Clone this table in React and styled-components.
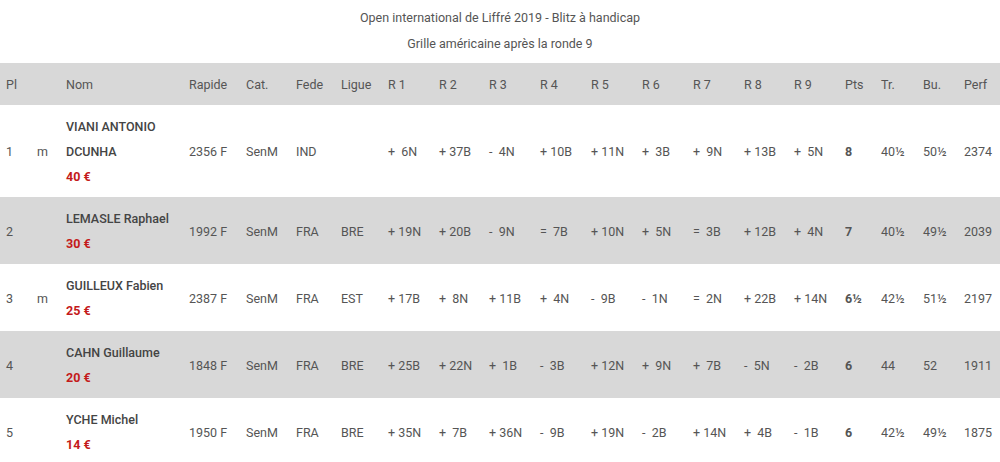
import styled, { createGlobalStyle } from "styled-components";

const GlobalStyle = createGlobalStyle`
  body {
    margin: 0;
    background: #fff;
    font-family: Roboto, "Liberation Sans", sans-serif;
  }
`;

const cols = [31, 29, 123, 57, 50, 45, 47, 51, 50, 51, 51, 51, 51, 51, 50, 51, 36, 42, 41, 42];
const headers = ["Pl", "", "Nom", "Rapide", "Cat.", "Fede", "Ligue", "R 1", "R 2", "R 3", "R 4", "R 5", "R 6", "R 7", "R 8", "R 9", "Pts", "Tr.", "Bu.", "Perf"];

const players = [
  {
    pl: "1", m: "m", name: "VIANI ANTONIO DCUNHA", prize: "40 €", elo: "2356 F", cat: "SenM", fede: "IND", ligue: "",
    rounds: ["+  6N", "+ 37B", "-  4N", "+ 10B", "+ 11N", "+  3B", "+  9N", "+ 13B", "+  5N"],
    pts: "8", tr: "40½", bu: "50½", perf: "2374",
  },
  {
    pl: "2", m: "", name: "LEMASLE Raphael", prize: "30 €", elo: "1992 F", cat: "SenM", fede: "FRA", ligue: "BRE",
    rounds: ["+ 19N", "+ 20B", "-  9N", "=  7B", "+ 10N", "+  5N", "=  3B", "+ 12B", "+  4N"],
    pts: "7", tr: "40½", bu: "49½", perf: "2039",
  },
  {
    pl: "3", m: "m", name: "GUILLEUX Fabien", prize: "25 €", elo: "2387 F", cat: "SenM", fede: "FRA", ligue: "EST",
    rounds: ["+ 17B", "+  8N", "+ 11B", "+  4N", "-  9B", "-  1N", "=  2N", "+ 22B", "+ 14N"],
    pts: "6½", tr: "42½", bu: "51½", perf: "2197",
  },
  {
    pl: "4", m: "", name: "CAHN Guillaume", prize: "20 €", elo: "1848 F", cat: "SenM", fede: "FRA", ligue: "BRE",
    rounds: ["+ 25B", "+ 22N", "+  1B", "-  3B", "+ 12N", "+  9N", "+  7B", "-  5N", "-  2B"],
    pts: "6", tr: "44", bu: "52", perf: "1911",
  },
  {
    pl: "5", m: "", name: "YCHE Michel", prize: "14 €", elo: "1950 F", cat: "SenM", fede: "FRA", ligue: "BRE",
    rounds: ["+ 35N", "+  7B", "+ 36N", "-  9B", "+ 19N", "-  2B", "+ 14N", "+  4B", "-  1B"],
    pts: "6", tr: "42½", bu: "49½", perf: "1875",
  },
];

const Page = styled.div`
  width: 1000px;
  color: #555;
  font-size: 12.5px;
`;

const Title = styled.div`
  text-align: center;
  line-height: 26px;
  padding-top: 5px;
  padding-bottom: 6px;
  color: #555;
`;

const Table = styled.table`
  width: 1000px;
  border-collapse: collapse;
  table-layout: fixed;
`;

const Row = styled.tr`
  background: ${(p) => (p.$shaded ? "#d8d8d8" : "#fff")};
`;

const Cell = styled.td`
  padding: 9px 0 8px 6px;
  line-height: 25px;
  vertical-align: middle;
  white-space: ${(p) => (p.$pre ? "pre" : "normal")};
  font-weight: ${(p) => (p.$bold ? 700 : 400)};
  text-align: left;
`;

const HeadCell = styled(Cell).attrs({ as: "th" })`
  font-weight: 400;
`;

const Name = styled.div`
  font-weight: 500;
  color: #444;
`;

const Prize = styled.div`
  font-weight: 700;
  color: #c41a1a;
`;

export default function App() {
  return (
    <Page>
      <GlobalStyle />
      <Title>
        Open international de Liffré 2019 - Blitz à handicap
        <br />
        Grille américaine après la ronde 9
      </Title>
      <Table>
        <colgroup>
          {cols.map((w, i) => (
            <col key={i} style={{ width: w }} />
          ))}
        </colgroup>
        <thead>
          <Row $shaded>
            {headers.map((h, i) => (
              <HeadCell key={i}>{h}</HeadCell>
            ))}
          </Row>
        </thead>
        <tbody>
          {players.map((p, i) => (
            <Row key={p.pl} $shaded={i % 2 === 1}>
              <Cell>{p.pl}</Cell>
              <Cell>{p.m}</Cell>
              <Cell>
                <Name>{p.name}</Name>
                <Prize>{p.prize}</Prize>
              </Cell>
              <Cell>{p.elo}</Cell>
              <Cell>{p.cat}</Cell>
              <Cell>{p.fede}</Cell>
              <Cell>{p.ligue}</Cell>
              {p.rounds.map((r, j) => (
                <Cell key={j} $pre>
                  {r}
                </Cell>
              ))}
              <Cell $bold>{p.pts}</Cell>
              <Cell>{p.tr}</Cell>
              <Cell>{p.bu}</Cell>
              <Cell>{p.perf}</Cell>
            </Row>
          ))}
        </tbody>
      </Table>
    </Page>
  );
}
